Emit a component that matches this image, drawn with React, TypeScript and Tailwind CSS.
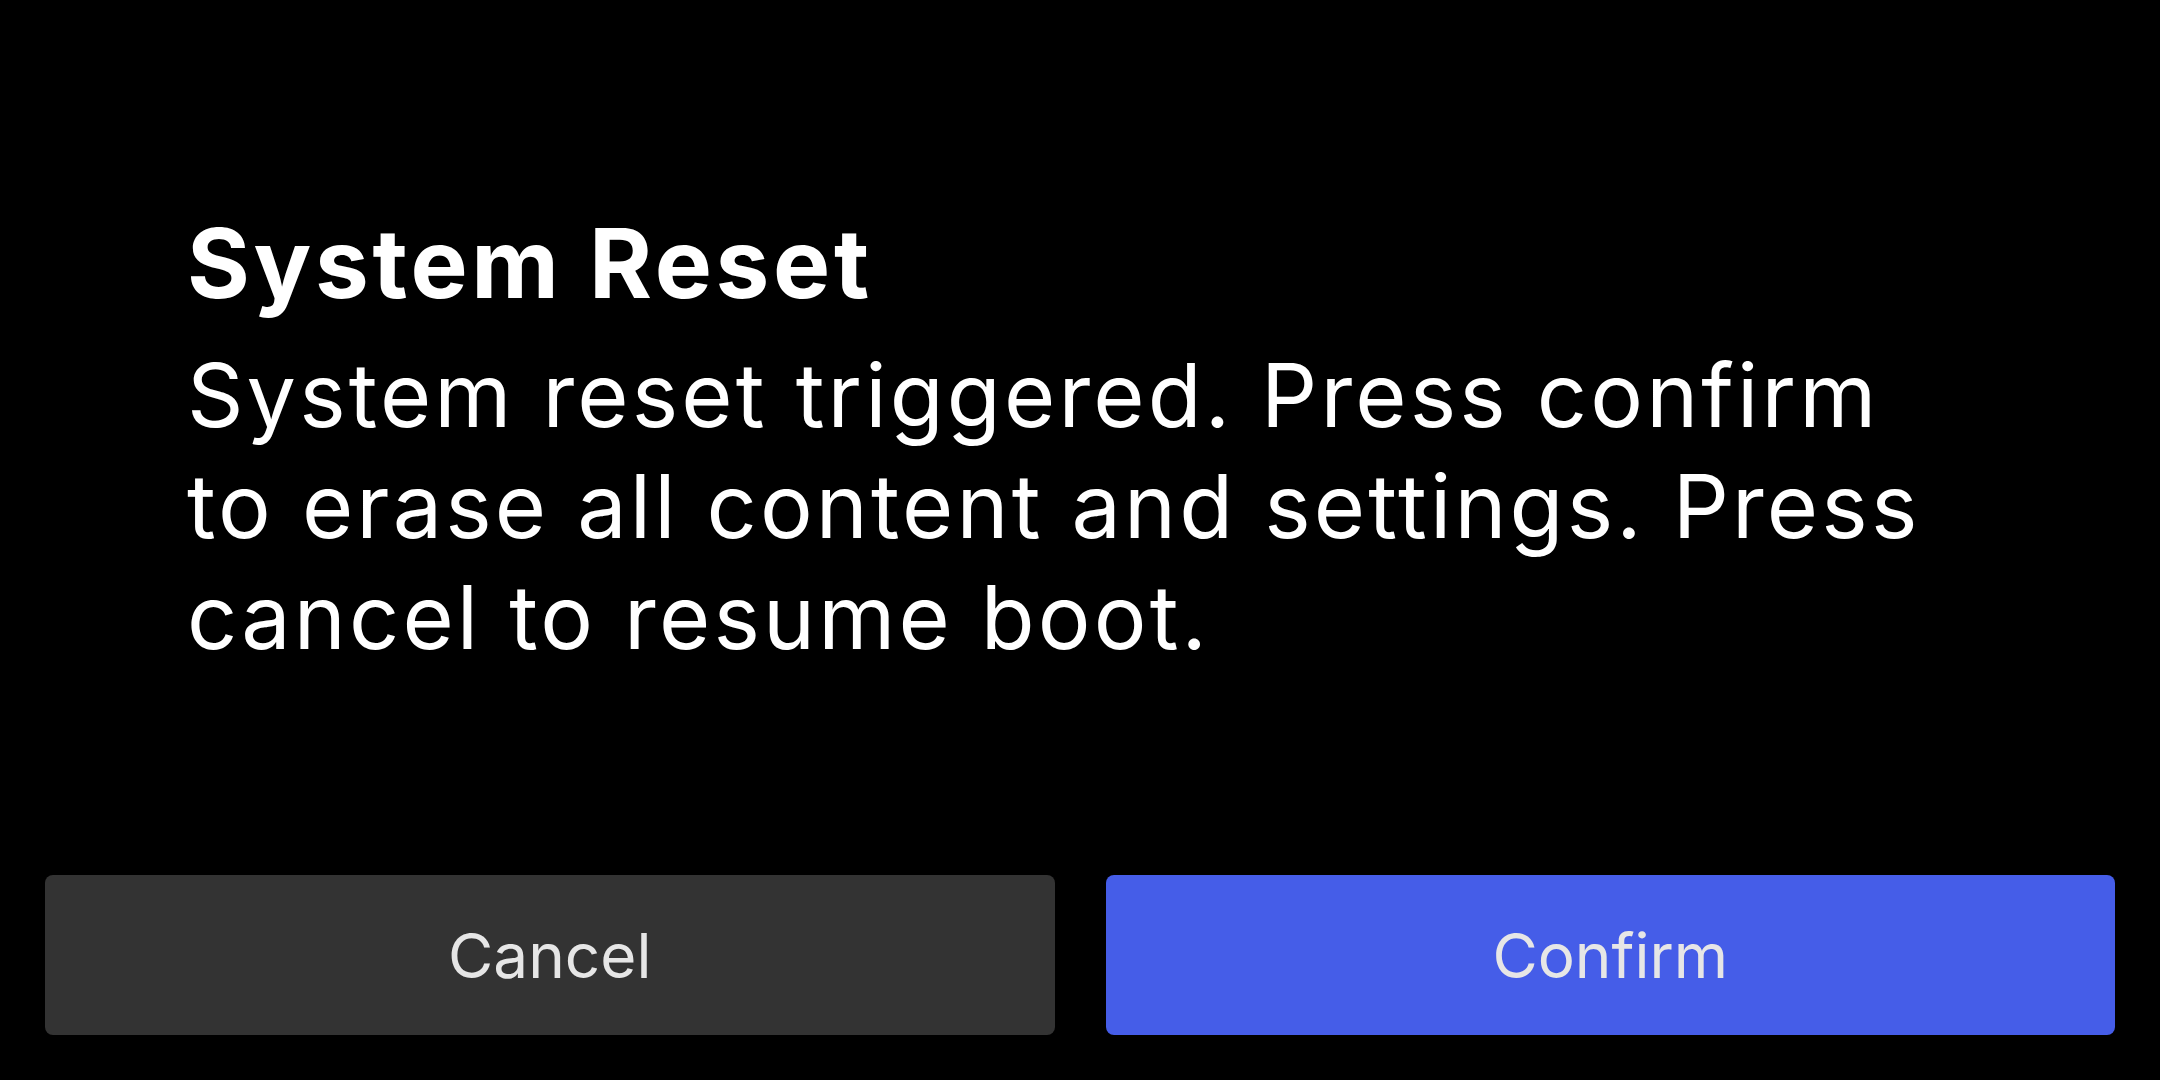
import React from "react";

export default function App() {
  return (
    <div
      className="w-[2160px] h-[1080px] bg-black flex flex-col justify-between overflow-hidden"
      style={{ fontFamily: "Inter, 'Noto Sans', sans-serif" }}
    >
      <div className="pt-[205px] pl-[187px] pr-[200px] flex flex-col">
        <h1 className="text-[96px] leading-[116px] font-bold text-white tracking-[3.7px]">System Reset</h1>
        <p className="mt-[19px] text-[88px] leading-[111px] text-white font-normal tracking-[3.15px]">
          System reset triggered. Press confirm to erase all content and settings. Press cancel to resume boot.
        </p>
      </div>
      <div className="px-[45px] pb-[45px] flex gap-[51px]">
        <button className="flex-1 h-[160px] rounded-[8px] bg-[#333333] text-[#e6e6e6] text-[62px] flex items-center justify-center">
          Cancel
        </button>
        <button className="flex-1 h-[160px] rounded-[8px] bg-[#455de8] text-[#e6e6e6] text-[62px] flex items-center justify-center">
          Confirm
        </button>
      </div>
    </div>
  );
}
